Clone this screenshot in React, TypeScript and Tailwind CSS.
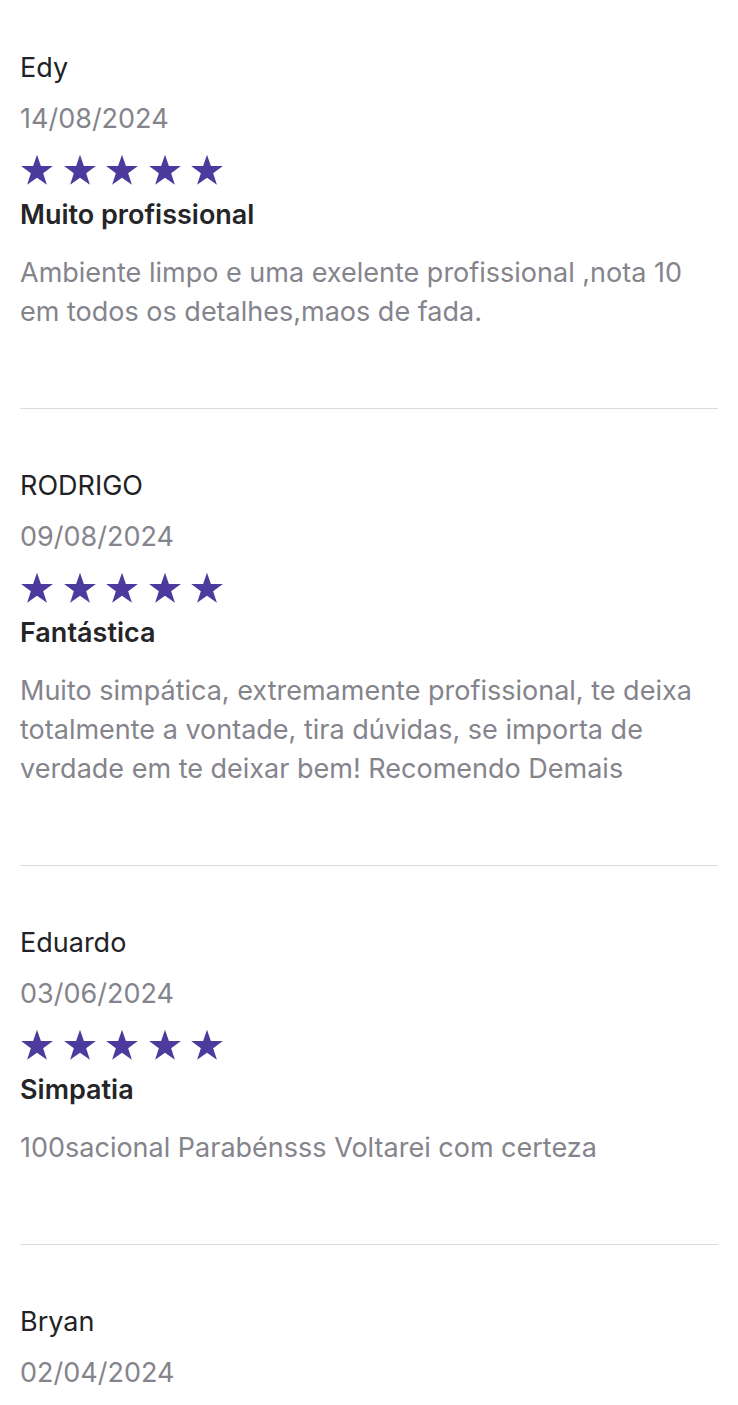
import React from 'react';

type Review = {
	name: string;
	date: string;
	rating?: number;
	title?: string;
	text?: string;
};

const reviews: Review[] = [
	{
		name: 'Edy',
		date: '14/08/2024',
		rating: 5,
		title: 'Muito profissional',
		text: 'Ambiente limpo e uma exelente profissional ,nota 10 em todos os detalhes,maos de fada.',
	},
	{
		name: 'RODRIGO',
		date: '09/08/2024',
		rating: 5,
		title: 'Fantástica',
		text: 'Muito simpática, extremamente profissional, te deixa totalmente a vontade, tira dúvidas, se importa de verdade em te deixar bem! Recomendo Demais',
	},
	{
		name: 'Eduardo',
		date: '03/06/2024',
		rating: 5,
		title: 'Simpatia',
		text: '100sacional Parabénsss Voltarei com certeza',
	},
	{
		name: 'Bryan',
		date: '02/04/2024',
	},
];

const Star = () => (
	<svg viewBox="0 0 24 24" className="w-[36px] h-[36px] text-[#4c3a9c]" fill="currentColor">
		<path d="M12 1.8l2.6 7.6h8l-6.5 4.8 2.5 7.7L12 17.1l-6.6 4.8 2.5-7.7L1.4 9.4h8z" />
	</svg>
);

export default function App() {
	return (
		<div className="min-h-screen bg-white px-5 font-['Inter',sans-serif]">
			{reviews.map((r, i) => (
				<div key={i} className={i === 0 ? 'pt-[42px]' : 'pt-[51px] border-t border-[#dcdcdf]'}>
					<p className="text-[27px] leading-[51px] text-[#222226]">{r.name}</p>
					<p className="text-[27px] leading-[51px] text-[#84848c]">{r.date}</p>
					{r.rating && (
						<>
							<div className="flex items-center gap-[6.5px] h-[51px] -ml-[1px]">
								{Array.from({ length: r.rating }).map((_, k) => (
									<Star key={k} />
								))}
							</div>
							<p className="text-[27px] leading-[39px] font-semibold text-[#252528]">{r.title}</p>
							<p className="mt-[19px] mb-[77px] text-[27px] leading-[39px] text-[#84848c]">{r.text}</p>
						</>
					)}
				</div>
			))}
		</div>
	);
}
